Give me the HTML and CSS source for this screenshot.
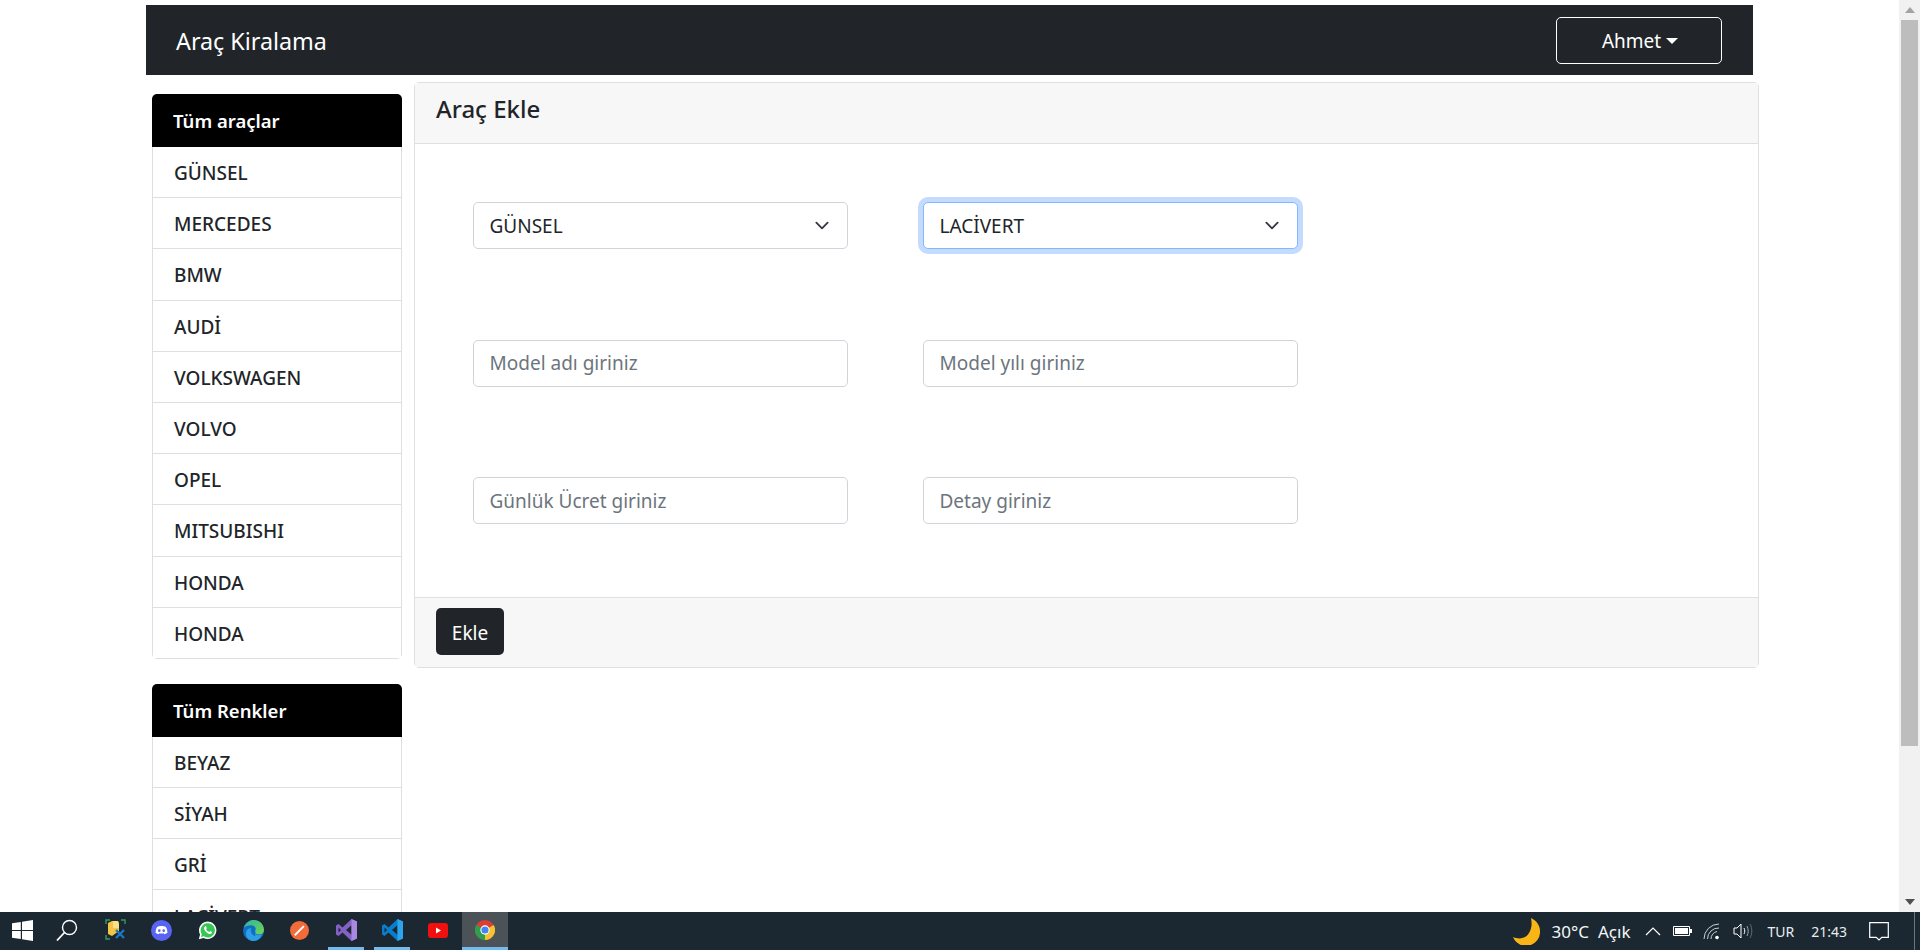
FILE: index.html
```html
<!DOCTYPE html>
<html lang="tr">
<head>
<meta charset="UTF-8">
<meta name="viewport" content="width=device-width, initial-scale=1.0">
<title>Araç Kiralama</title>
<link rel="stylesheet" href="styles.css">
</head>
<body>
<div class="window">
    <div class="page">
        <nav class="navbar">
            <a class="brand" href="#">Araç Kiralama</a>
            <button type="button" class="user-button">Ahmet</button>
        </nav>
        <div class="layout">
            <aside class="sidebar">
                <div class="list-card">
                    <div class="list-head">Tüm araçlar</div>
                    <div class="list-item">GÜNSEL</div>
                    <div class="list-item">MERCEDES</div>
                    <div class="list-item">BMW</div>
                    <div class="list-item">AUDİ</div>
                    <div class="list-item">VOLKSWAGEN</div>
                    <div class="list-item">VOLVO</div>
                    <div class="list-item">OPEL</div>
                    <div class="list-item">MITSUBISHI</div>
                    <div class="list-item">HONDA</div>
                    <div class="list-item">HONDA</div>
                </div>
                <div class="list-card">
                    <div class="list-head">Tüm Renkler</div>
                    <div class="list-item">BEYAZ</div>
                    <div class="list-item">SİYAH</div>
                    <div class="list-item">GRİ</div>
                    <div class="list-item">LACİVERT</div>
                </div>
            </aside>
            <main class="card">
                <h1 class="card-header">Araç Ekle</h1>
                <div class="card-body">
                    <select class="field field-select">
                        <option>GÜNSEL</option>
                        <option>MERCEDES</option>
                        <option>BMW</option>
                    </select>
                    <select class="field field-select field-focus">
                        <option>LACİVERT</option>
                        <option>BEYAZ</option>
                        <option>SİYAH</option>
                    </select>
                    <input class="field" type="text" placeholder="Model adı giriniz">
                    <input class="field" type="text" placeholder="Model yılı giriniz">
                    <input class="field" type="text" placeholder="Günlük Ücret giriniz">
                    <input class="field" type="text" placeholder="Detay giriniz">
                </div>
                <div class="card-footer">
                    <button type="button" class="add-button">Ekle</button>
                </div>
            </main>
        </div>
    </div>
    <div class="scrollbar">
        <svg class="scroll-arrow" width="10" height="6" viewBox="0 0 10 6"><path d="M5 0l5 6H0z" fill="#a3a3a3"/></svg>
        <div class="scroll-thumb"></div>
        <svg class="scroll-arrow" width="10" height="6" viewBox="0 0 10 6"><path d="M0 0h10L5 6z" fill="#505050"/></svg>
    </div>
</div>

<footer class="taskbar">
    <div class="task-slot task-start">
        <svg width="21" height="21" viewBox="0 0 21 21"><path d="M0 3.200l8.800-1.300v8.100H0zM10 1.700L21 0v10H10zM0 11h8.800v8.100L0 17.800zM10 11h11v10l-11-1.700z" fill="#fff"/></svg>
    </div>
    <div class="task-slot task-search">
        <svg width="22" height="23" viewBox="0 0 22 23"><circle cx="13.500" cy="8.500" r="7" fill="none" stroke="#fff" stroke-width="1.400"/><path d="M8.500 13.500L1 21.500" stroke="#fff" stroke-width="1.800"/></svg>
    </div>
    <div class="task-slot">
        <svg width="21" height="22" viewBox="0 0 21 22"><path d="M1 5V1h4M16 1h4v4M1 16v4h4" fill="none" stroke="#2e9e5b" stroke-width="1.400"/><path d="M3 4l4-2h6l1 3v7l-7 5-4-2z" fill="#f3c445"/><path d="M8 2h5l1 3v4H8z" fill="#fbe08a"/><path d="M11 11l8 8M19 11l-8 8" stroke="#1a78c2" stroke-width="2.400"/></svg>
    </div>
    <div class="task-slot">
        <svg width="21" height="21" viewBox="0 0 24 24"><circle cx="12" cy="12" r="12" fill="#5865f2"/><path d="M7 8c1.500-.8 3-1.200 5-1.200s3.500.4 5 1.200c1.200 2 1.800 4 1.800 6.600-1.200.9-2.400 1.400-3.500 1.600l-.8-1.200c-1.600.4-3.400.4-5 0l-.8 1.200c-1.100-.2-2.300-.7-3.500-1.600C5.200 12 5.800 10 7 8z" fill="#fff"/><circle cx="9.500" cy="12.200" r="1.500" fill="#5865f2"/><circle cx="14.500" cy="12.200" r="1.500" fill="#5865f2"/></svg>
    </div>
    <div class="task-slot">
        <svg width="19" height="19" viewBox="0 0 24 24"><path d="M1 23l1.600-6A11 11 0 1 1 7 21.400z" fill="#fff"/><path d="M3.800 20.200l1-3.500A9 9 0 1 1 7.400 19.300z" fill="#35c653"/><path d="M8.800 6.800c-.9.700-1.500 2-.9 3.600 1 2.600 3 4.800 5.900 5.900 1.700.6 3 0 3.600-1 .4-.6.400-1.200.3-1.400l-2.400-1.200-1.100 1.300c-1.800-.7-3.200-2-4-3.900l1-1.100-1-2.400c-.3-.3-1-.3-1.400-.1z" fill="#fff"/></svg>
    </div>
    <div class="task-slot">
        <svg width="21" height="21" viewBox="0 0 24 24"><defs><linearGradient id="edgeGreen" x1="0" y1="0" x2="1" y2="1"><stop offset="0" stop-color="#33b4a0"/><stop offset="1" stop-color="#6fd64f"/></linearGradient></defs><circle cx="12" cy="12" r="12" fill="#0f6fc6"/><path d="M1 9C3 3 8 0 12 0c7 0 12 5 12 11.500 0 3-2 5-5 5-3.500 0-5-1.500-5-3.500 0-1.500.5-2 .5-3C14.500 7.500 12 6 9 6 5.500 6 2.500 7 1 9z" fill="url(#edgeGreen)"/><path d="M14 13c0 5 5 5 7.500 3.500C20 20.500 16.500 24 12 24c-4.500 0-8-3-8.500-7.500C3 12 6 9 9.500 9.500 8 12 9 17 14 18.500z" fill="#2d9fe6"/></svg>
    </div>
    <div class="task-slot">
        <svg width="19" height="19" viewBox="0 0 24 24"><circle cx="12" cy="12" r="12" fill="#f26b3a"/><path d="M6 18L17.500 6.500" stroke="#fff" stroke-width="2.400"/></svg>
    </div>
    <div class="task-slot task-open">
        <svg width="21" height="22" viewBox="0 0 21 22"><path d="M15.500 0L21 2.500v17L15.500 22 6.500 13.500 2.500 17 0 15.500v-9L2.500 5l4 3.500z" fill="#8661c5"/><path d="M15.500 6.200L10 11l5.500 4.800zM2.500 8.500v5L5 11z" fill="#1b2831"/><path d="M15.500 0L21 2.500v17L15.500 22z" fill="#a888e0"/></svg>
    </div>
    <div class="task-slot task-open">
        <svg width="21" height="22" viewBox="0 0 21 22"><path d="M15.500 0L21 2.500v17L15.500 22 6.500 13.500 2.500 17 0 15.500v-9L2.500 5l4 3.500z" fill="#0a7ccb"/><path d="M15.500 6.200L10 11l5.500 4.800zM2.500 8.500v5L5 11z" fill="#1b2831"/><path d="M15.500 0L21 2.500v17L15.500 22z" fill="#2ca5ec"/></svg>
    </div>
    <div class="task-slot">
        <svg width="20" height="15" viewBox="0 0 20 15"><rect width="20" height="15" rx="3" fill="#f01010"/><path d="M8 4.500l5 3-5 3z" fill="#fff"/></svg>
    </div>
    <div class="task-slot task-open task-active">
        <svg width="20" height="20" viewBox="0 0 24 24"><circle cx="12" cy="12" r="12" fill="#d93f33"/><path d="M12 12L22.400 6A12 12 0 0 1 12 24z" fill="#f6c232"/><path d="M12 12L12 24A12 12 0 0 1 1.600 6z" fill="#2f9e4d"/><circle cx="12" cy="12" r="5.600" fill="#fff"/><circle cx="12" cy="12" r="4.300" fill="#4285f4"/></svg>
    </div>

    <div class="tray">
        <svg class="tray-moon" width="28" height="28" viewBox="0 0 28 28"><path d="M19 1c6 3 9 8 9 13A14 14 0 0 1 1 20c7 3 13 1 16-4 3-5 3-10 2-15z" fill="#f9b517"/></svg>
        <span class="tray-weather">30°C</span>
        <span class="tray-weather tray-sky">Açık</span>
        <svg class="tray-chevron" width="16" height="9" viewBox="0 0 16 9"><path d="M1 8l7-7 7 7" fill="none" stroke="#fff" stroke-width="1.200"/></svg>
        <svg class="tray-battery" width="19" height="10" viewBox="0 0 19 10"><path d="M.5.5h16v9H.5z" fill="none" stroke="#fff"/><path d="M2 2h13v6H2z" fill="#fff"/><path d="M17 3h2v4h-2z" fill="#fff"/></svg>
        <svg class="tray-wifi" width="18" height="17" viewBox="0 0 18 17"><g fill="none" stroke="#c9d0d4"><path d="M1 16A15 15 0 0 1 16 1"/><path d="M4.500 16A11 11 0 0 1 16 5" /><path d="M8 16A7.500 7.500 0 0 1 14 8.500"/></g><circle cx="14" cy="14.500" r="1.800" fill="#fff"/></svg>
        <svg class="tray-volume" width="20" height="16" viewBox="0 0 20 16"><path d="M1 5h3l4-4v14l-4-4H1z" fill="none" stroke="#fff"/><path d="M11 5c1 2 1 4 0 6" fill="none" stroke="#fff"/><path d="M14 3c1.600 3 1.600 7 0 10" fill="none" stroke="#9aa5ab"/><path d="M17 1c2.400 4 2.400 10 0 14" fill="none" stroke="#5f6c74"/></svg>
        <span class="tray-text tray-lang">TUR</span>
        <span class="tray-text tray-clock">21:43</span>
        <svg class="tray-note" width="20" height="19" viewBox="0 0 20 19"><path d="M.7.7h18.600v14.600h-6.500L10 18l-2.800-2.700H.7z" fill="none" stroke="#fff" stroke-width="1.200"/></svg>
        <div class="tray-desktop"></div>
    </div>
</footer>
</body>
</html>
```

FILE: styles.css
```css
* {
    box-sizing: border-box;
}
body {
    margin: 0;
    height: 950px;
    display: flex;
    flex-direction: column;
    overflow: hidden;
    font-family: "Noto Sans", Arial, sans-serif;
    font-size: 19px;
    color: #212529;
    background-color: #fff;
}
.window {
    flex: 1;
    min-height: 0;
    display: flex;
}
.page {
    flex: 1;
    min-width: 0;
    overflow: hidden;
    padding: 5px 0 0 146px;
}
.scrollbar {
    width: 21px;
    display: flex;
    flex-direction: column;
    align-items: center;
    background-color: #f1f1f1;
}
.scroll-arrow {
    flex: none;
    margin: 7px 0;
}
.scroll-thumb {
    width: 17px;
    height: 726px;
    background-color: #bdbdbd;
    margin-bottom: auto;
}

/* top bar */
.navbar {
    width: 1607px;
    height: 70px;
    display: flex;
    align-items: center;
    justify-content: space-between;
    padding: 0 31px 0 30px;
    background-color: #212529;
}
.brand {
    color: #fff;
    font-size: 23.300px;
    padding-top: 2px;
    text-decoration: none;
}
.user-button {
    width: 166px;
    height: 47px;
    padding: 2px 0 0 2px;
    border: 1px solid #fff;
    border-radius: 5px;
    background: none;
    color: #fff;
    font-family: inherit;
    font-size: 19px;
    cursor: pointer;
}
.user-button::after {
    content: "";
    display: inline-block;
    margin-left: 5px;
    vertical-align: 4px;
    border-top: 6px solid #fff;
    border-left: 6px solid transparent;
    border-right: 6px solid transparent;
}

.layout {
    display: flex;
    align-items: flex-start;
    margin-top: 7px;
}

/* left lists */
.sidebar {
    width: 250px;
    margin: 12px 0 0 6px;
    flex: none;
}
.list-card {
    margin-bottom: 25px;
    border-radius: 5px;
    overflow: hidden;
}
.list-head {
    height: 53px;
    padding: 0 21px;
    display: flex;
    align-items: center;
    background-color: #000;
    color: #fff;
    font-weight: 600;
    font-size: 18.500px;
}
.list-item {
    height: 51.200px;
    padding: 2px 21px 0;
    display: flex;
    align-items: center;
    font-weight: 500;
    font-size: 19px;
    border: 1px solid #dfdfdf;
    border-top: none;
}

/* form card */
.card {
    width: 1345px;
    margin-left: 12px;
    border: 1px solid #dfdfdf;
    border-radius: 5px;
}
.card-header {
    margin: 0;
    height: 61px;
    padding: 0 21px 9px;
    display: flex;
    align-items: center;
    background-color: #f7f7f7;
    border-bottom: 1px solid #dfdfdf;
    font-size: 24px;
    font-weight: 500;
}
.card-body {
    display: grid;
    grid-template-columns: 375px 375px;
    column-gap: 75px;
    row-gap: 90.500px;
    padding: 58px 58px 73px;
}
.field {
    height: 47px;
    width: 100%;
    padding: 0 15.500px;
    border: 1px solid #ced4da;
    border-radius: 5px;
    background-color: #fff;
    color: #212529;
    font-family: inherit;
    font-size: 19px;
}
.field::placeholder {
    color: #6c757d;
}
.field-select {
    appearance: none;
    background-image: url("data:image/svg+xml,%3csvg xmlns='http://www.w3.org/2000/svg' viewBox='0 0 16 16'%3e%3cpath fill='none' stroke='%23343a40' stroke-linecap='round' stroke-linejoin='round' stroke-width='2' d='M2 5l6 6 6-6'/%3e%3c/svg%3e");
    background-repeat: no-repeat;
    background-position: right 15px center;
    background-size: 20px 15px;
}
.field-focus {
    border-color: #86b7fe;
    box-shadow: 0 0 0 5px rgba(13, 110, 253, 0.25);
}
.card-footer {
    height: 70px;
    padding: 10px 21px;
    background-color: #f7f7f7;
    border-top: 1px solid #dfdfdf;
}
.add-button {
    width: 68px;
    height: 47px;
    padding: 2px 0 0;
    border: none;
    border-radius: 5px;
    background-color: #212529;
    color: #fff;
    font-family: inherit;
    font-size: 19px;
    cursor: pointer;
}

/* windows taskbar */
.taskbar {
    flex: none;
    height: 38px;
    display: flex;
    align-items: stretch;
    background-color: #1b2831;
    color: #fff;
}
.task-slot {
    width: 46.200px;
    display: flex;
    align-items: center;
    justify-content: center;
    padding-bottom: 2px;
}
.task-start {
    width: 44px;
}
.task-search {
    width: 48px;
    padding-right: 3px;
}
.task-open {
    border-bottom: 3px solid #76b9ed;
    margin: 0 5.100px;
    width: 36px;
    padding-bottom: 0;
}
.task-active {
    width: 46.200px;
    margin: 0;
    background-color: #4c5358;
}
.tray {
    margin-left: auto;
    display: flex;
    align-items: center;
}
.tray-moon {
    margin-right: 12px;
}
.tray-weather {
    font-size: 17px;
    color: #f4f6f7;
}
.tray-sky {
    margin-left: 9px;
}
.tray-chevron {
    margin-left: 15px;
}
.tray-battery {
    margin-left: 12px;
}
.tray-wifi {
    margin-left: 11px;
}
.tray-volume {
    margin-left: 12px;
}
.tray-text {
    font-size: 14px;
    color: #e8edf0;
}
.tray-lang {
    margin-left: 14px;
}
.tray-clock {
    margin-left: 17px;
}
.tray-note {
    margin-left: 22px;
}
.tray-desktop {
    width: 1px;
    height: 38px;
    margin: 0 5px 0 25px;
    background-color: #6a767d;
}
```
